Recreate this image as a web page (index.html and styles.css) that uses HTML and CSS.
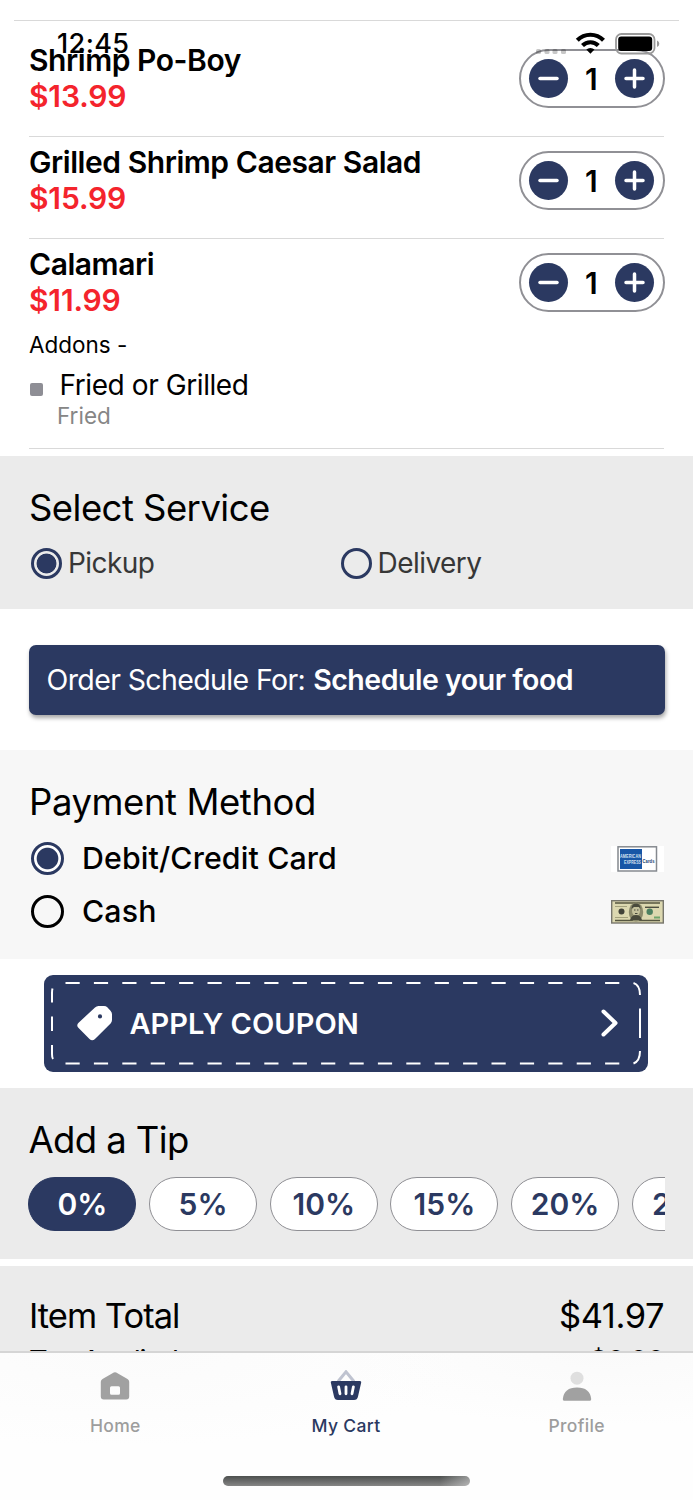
FILE: index.html
```html
<!DOCTYPE html>
<html lang="en">
<head>
<meta charset="utf-8">
<title>My Cart</title>
<link rel="stylesheet" href="styles.css">
</head>
<body>
<div class="status">
  <span class="clock">12:45</span>
  <svg class="status-icons" width="128" height="26" viewBox="0 0 128 26">
    <g fill="#000" fill-opacity=".22"><rect x="4" y="18" width="5" height="5" rx="1.5"/><rect x="12.500" y="18" width="5" height="5" rx="1.500"/><rect x="20.500" y="18" width="5" height="5" rx="1.500"/><rect x="29" y="18" width="5" height="5" rx="1.500"/></g>
    <g fill="none" stroke="#000" stroke-width="4.200"><path d="M45.300 9.200a18.500 18.500 0 0 1 26.200 0"/><path d="M50.500 14.500a11.200 11.200 0 0 1 15.800 0"/></g>
    <path d="M54.300 18.600a6 6 0 0 1 8.200 0l-4.100 4.200z"/>
    <rect x="84" y="3" width="38.500" height="19.500" rx="5.500" fill="none" stroke="#9a9a9a" stroke-width="1.800"/>
    <rect x="86.200" y="5.500" width="34" height="14.500" rx="3"/>
    <path d="M125 9.500q2.300 1 2.300 3.300t-2.300 3.300z" fill="#999"/>
  </svg>
</div>

<main>
  <section class="items">
    <article class="item">
      <div><h2>Shrimp Po-Boy</h2><p class="price">$13.99</p></div>
      <div class="stepper">
        <button aria-label="Decrease"><svg width="39" height="39" viewBox="0 0 39 39"><path d="M11 19.500h17"/></svg></button>
        <span>1</span>
        <button aria-label="Increase"><svg width="39" height="39" viewBox="0 0 39 39"><path d="M11 19.500h17M19.500 11v17"/></svg></button>
      </div>
    </article>
    <article class="item">
      <div><h2>Grilled Shrimp Caesar Salad</h2><p class="price">$15.99</p></div>
      <div class="stepper">
        <button aria-label="Decrease"><svg width="39" height="39" viewBox="0 0 39 39"><path d="M11 19.500h17"/></svg></button>
        <span>1</span>
        <button aria-label="Increase"><svg width="39" height="39" viewBox="0 0 39 39"><path d="M11 19.500h17M19.500 11v17"/></svg></button>
      </div>
    </article>
    <article class="item tall">
      <div>
        <h2>Calamari</h2><p class="price">$11.99</p>
        <p class="addons">Addons -</p>
        <p class="addon"><i></i>Fried or Grilled</p>
        <p class="choice">Fried</p>
      </div>
      <div class="stepper">
        <button aria-label="Decrease"><svg width="39" height="39" viewBox="0 0 39 39"><path d="M11 19.500h17"/></svg></button>
        <span>1</span>
        <button aria-label="Increase"><svg width="39" height="39" viewBox="0 0 39 39"><path d="M11 19.500h17M19.500 11v17"/></svg></button>
      </div>
    </article>
  </section>

  <section class="service">
    <h1>Select Service</h1>
    <div class="options">
      <label><i class="radio on"></i><span>Pickup</span></label>
      <label><i class="radio"></i><span>Delivery</span></label>
    </div>
  </section>

  <section class="schedule">
    <button class="schedule-btn"><span>Order Schedule For:</span><b>Schedule your food</b></button>
  </section>

  <section class="payment">
    <h1>Payment Method</h1>
    <label class="pay"><i class="radio on"></i><span>Debit/Credit Card</span>
      <svg class="card" width="53" height="26" viewBox="0 0 53 26">
        <rect width="53" height="26" fill="#fff"/>
        <rect x="7" y=".800" width="38.500" height="24.200" fill="#fff" stroke="#85898f" stroke-width="1.500"/>
        <path d="M9 3h22v20H9z" fill="#1856a6"/>
        <text x="9" y="12.300" textLength="21" lengthAdjust="spacingAndGlyphs" class="amex">AMERICAN</text>
        <text x="13" y="17.500" textLength="17" lengthAdjust="spacingAndGlyphs" class="amex">EXPRESS</text>
        <text x="31.500" y="17" textLength="12" lengthAdjust="spacingAndGlyphs" class="cards">Cards</text>
      </svg>
    </label>
    <label class="pay"><i class="radio black"></i><span>Cash</span>
      <svg width="53" height="24" viewBox="0 0 53 24">
        <rect x=".700" y=".700" width="51.600" height="22.300" fill="#dcd8b0" stroke="#77766c" stroke-width="1.400"/>
        <path d="M4 3h45M4 20.500h45" stroke="#56563f" stroke-width="1.500"/>
        <path d="M4 6.500h12M4 17.500h13M34 6.500h14" stroke="#a3a17c" stroke-width="1.200"/>
        <circle cx="10.500" cy="11.500" r="3" fill="#414238"/>
        <ellipse cx="25" cy="12" rx="7.200" ry="9.600" fill="#8b8a6b"/>
        <ellipse cx="25" cy="10.500" rx="4" ry="5.700" fill="#c4c19c"/>
        <path d="M20.500 9q0-5.500 4.500-5.500T29.500 9l-1.500-2h-5zM19 20q1.500-5 6-5t6 5z" fill="#494a3c"/>
        <path d="M23 10h1.500m1.500 0h1.500M24 13.500h2.500" stroke="#494a3c"/>
        <circle cx="38.700" cy="11.700" r="3.200" fill="#4c8060"/>
        <path d="M34 7.500h14" stroke="#4d4e43"/><path d="M43 17.500h6" stroke="#6fa56c" stroke-width="2"/>
      </svg>
    </label>
  </section>

  <section class="coupon-wrap">
    <button class="coupon">
      <svg class="stitch" width="604" height="97" viewBox="0 0 604 97">
        <path d="M21.500 8H583M21.500 88.500H583" stroke-dasharray="14.200 14.200"/>
        <path d="M8.500 13.500Q8 15 8 18v9.500M8 41.500V56M8 70v9q0 3.500 1 5M589.500 8q6.500 2 6.500 12M596 33.500V63M596 76q0 10-6.500 12.500"/>
      </svg>
      <svg class="tag" width="35" height="35" viewBox="0 0 35 35"><path fill-rule="evenodd" d="M18 1.500Q19.500 0 21.500 0H27q2 0 3.300 1.300l3.200 3.400Q35 6.200 35 8.200V14q0 2-1.400 3.400L18 33q-2.800 2.500-5.500 0L1.600 22q-2.700-2.600 0-5.300zM23 8.300a2.100 2.100 0 1 0 0 4.200 2.100 2.100 0 0 0 0-4.200z"/></svg>
      <span>APPLY COUPON</span>
      <svg class="chev" width="18" height="28" viewBox="0 0 18 28"><path d="M2.500 2.500l12 11.500-12 11.500"/></svg>
    </button>
  </section>

  <section class="tip">
    <h1>Add a Tip</h1>
    <div class="chips">
      <span class="chip active">0%</span><span class="chip">5%</span><span class="chip">10%</span><span class="chip">15%</span><span class="chip">20%</span><span class="chip">25%</span>
    </div>
  </section>

  <section class="totals">
    <div class="line"><span class="label">Item Total</span><span>$41.97</span></div>
    <div class="line small"><span>Tax Applied</span><span>$0.00</span></div>
  </section>
</main>

<nav class="tabs">
  <a class="tab">
    <svg width="32" height="32" viewBox="0 0 32 32"><path fill="#a1a1a1" fill-rule="evenodd" d="M14.800 2.500q1.200-.700 2.400 0l11.300 6.400q1.700 1 1.700 2.900v14.700q0 3-3 3H4.800q-3 0-3-3V11.800q0-1.900 1.700-2.900zM12.500 16.300q-1.500 0-1.500 1.500v5.400q0 1.500 1.500 1.500h7q1.500 0 1.500-1.500v-5.400q0-1.500-1.500-1.500z"/></svg>
    <span>Home</span>
  </a>
  <a class="tab current">
    <svg width="32" height="32" viewBox="0 0 32 32"><path d="M8 11.500L16 1.800l8 9.700" fill="none" stroke="#bfc3d0" stroke-width="3"/><path d="M2 11h28q1.500 0 1.200 1.500L28 26.500q-.700 3.500-4 3.500H8q-3.300 0-4-3.500L.800 12.500Q.500 11 2 11z" fill="#2b3961"/><path d="M8.600 16.800l1.400 7M16 16.800v7M23.400 16.800l-1.400 7" stroke="#fff" stroke-width="2.800" stroke-linecap="round"/></svg>
    <span>My Cart</span>
  </a>
  <a class="tab">
    <svg width="32" height="32" viewBox="0 0 32 32"><circle cx="16" cy="8.200" r="6.500" fill="#dfdfdf"/><path d="M1.800 29Q3 17.500 16 17.500T30.200 29q.100 1.800-1.200 1.800H3Q1.700 30.800 1.800 29z" fill="#a1a1a1"/></svg>
    <span>Profile</span>
  </a>
  <div class="home-indicator"></div>
</nav>
</body>
</html>
```
FILE: styles.css
```css
* { box-sizing: border-box; }
body { margin: 0; width: 693px; height: 1500px; overflow: hidden; position: relative; background: #fff; color: #000; font-family: Inter, "Liberation Sans", sans-serif; }
h1, h2, p { margin: 0; font-weight: 400; }
button { border: 0; padding: 0; margin: 0; font: inherit; color: inherit; letter-spacing: inherit; background: none; }
svg { display: block; flex: none; }

.status { position: absolute; z-index: 2; left: 57px; top: 31px; width: 603px; height: 26px; display: flex; justify-content: space-between; align-items: center; }
.clock { font-size: 27px; line-height: 28px; font-weight: 550; letter-spacing: .400px; }

.items { height: 456px; margin: 0 14px; padding: 35px 15px 0; background: linear-gradient(#d9d9d9, #d9d9d9) 0 20px / 100% 1px no-repeat; }
.item { display: flex; justify-content: space-between; height: 102px; padding-top: 7px; border-bottom: 1px solid #d9d9d9; }
.item.tall { height: 210px; }
.item h2 { font-size: 30px; line-height: 36px; font-weight: 600; letter-spacing: -.450px; }
.price { font-size: 30px; line-height: 36px; font-weight: 600; color: #f4242c; letter-spacing: -.150px; }
.addons { font-size: 22.500px; line-height: 28px; margin-top: 13px; }
.addon { display: flex; align-items: center; font-size: 28px; line-height: 34px; margin-top: 9px; letter-spacing: -.420px; }
.addon i { width: 13px; height: 13px; border-radius: 2px; background: #8e8e95; margin: 9px 16.500px 0 1px; }
.choice { font-size: 22.500px; line-height: 28px; margin-left: 28px; color: #868686; }
.stepper { display: flex; align-items: center; justify-content: space-between; width: 145.500px; height: 59px; margin: 7px -.500px 0 0; padding: 0 9px 0 8px; border: 2px solid #909095; border-radius: 30px; font-size: 30px; font-weight: 600; }
.stepper button { width: 39px; height: 39px; border-radius: 50%; background: #2b3961; }
.stepper path { stroke: #fff; stroke-width: 3.500; stroke-linecap: round; }

h1 { font-size: 36.500px; line-height: 44px; letter-spacing: -.550px; }
.service { height: 153px; background: #ebebeb; padding: 30px 29px 0; }
.options { display: grid; grid-template-columns: 309.500px 1fr; margin-top: 16px; }
.options label { display: flex; align-items: center; gap: 6px; padding-left: 2px; font-size: 28px; line-height: 34px; letter-spacing: -.550px; color: #373737; }
.radio { flex: none; width: 31px; height: 31px; border: 3px solid #2b3961; border-radius: 50%; }
.radio.on { background: radial-gradient(circle, #2b3961 9.500px, transparent 10.300px); }
.radio.black { border-color: #000; }

.schedule { height: 141px; padding: 35.500px 28.500px; }
.schedule-btn { display: flex; align-items: center; gap: 8px; width: 636px; height: 70px; padding: 0 0 1px 18px; border-radius: 7px; background: #2b3961; color: #fff; font-size: 28.500px; letter-spacing: -.620px; box-shadow: 1px 3px 4px rgba(0,0,0,.35); white-space: nowrap; }
.schedule-btn b { font-weight: 600; letter-spacing: -.480px; }

.payment { height: 209px; background: #f7f7f7; padding: 30px 29px 0; }
.pay { display: flex; align-items: center; height: 53px; font-size: 30.300px; font-weight: 500; letter-spacing: .130px; }
.payment h1 { margin-bottom: 8px; letter-spacing: -.420px; }
.pay .radio { width: 33px; height: 33px; margin: 0 18px 0 2px; }
.pay .radio.on { background: radial-gradient(circle, #2b3961 10.300px, #fff 11.300px); }
.pay span { margin-top: -1px; }
.pay svg { margin-left: auto; }
.amex { font: 700 5px "Liberation Sans", sans-serif; fill: #d5e2f0; }
.cards { font: 700 5.500px "Liberation Sans", sans-serif; fill: #163b6c; }

.coupon-wrap { height: 129px; padding: 16px 44.400px; }
.coupon { position: relative; display: flex; align-items: center; width: 604px; height: 96.500px; padding: 0 29.500px 0 32.500px; border-radius: 9px; background: #2b3961; color: #fff; font-size: 29px; font-weight: 560; letter-spacing: .050px; }
.stitch { position: absolute; left: 0; top: 0; fill: none; stroke: #fff; stroke-width: 2; }
.tag { fill: #fff; margin-right: 17.500px; }
.chev { margin-left: auto; fill: none; stroke: #fff; stroke-width: 4; stroke-linecap: round; stroke-linejoin: round; }

.tip { height: 171px; background: #ebebeb; padding: 30px 28.400px 0; }
.tip h1 { letter-spacing: -.600px; }
.chips { display: flex; gap: 12.700px; margin-top: 15px; overflow: hidden; }
.chip { flex: none; width: 108px; height: 54px; display: flex; align-items: center; justify-content: center; border: 1.500px solid #8f8f94; border-radius: 27px; background: #fff; color: #2b3961; font-size: 30px; font-weight: 600; }
.chip.active { background: #2b3961; border-color: #2b3961; color: #fff; }

.totals { margin-top: 7px; height: 234px; background: #ebebeb; padding: 28px 29px 0; }
.line { display: flex; justify-content: space-between; font-size: 34.500px; line-height: 44px; letter-spacing: -.450px; }
.line .label { letter-spacing: -.980px; }
.line.small { font-size: 29px; line-height: 36px; margin-top: 5px; letter-spacing: -1.100px; }

.tabs { position: absolute; z-index: 3; left: 0; bottom: 0; width: 693px; height: 149px; border-top: 2px solid #d5d5d5; background: radial-gradient(ellipse at 17% 0, #fbfbfb, transparent 45%), radial-gradient(ellipse at 88% 0, #fafafa, transparent 35%), #fefefe; display: grid; grid-template-columns: repeat(3, 230.700px); }
.tab { display: flex; flex-direction: column; align-items: center; padding-top: 17px; gap: 11px; font-size: 17.500px; line-height: 26px; font-weight: 500; letter-spacing: .350px; color: #9d9d9d; }
.current { color: #2b3961; }
.home-indicator { position: absolute; left: 223px; top: 123px; width: 247px; height: 10px; border-radius: 5px; background: linear-gradient(90deg, transparent 88%, rgba(255,255,255,.4)), linear-gradient(#4d504f, #858585); }
```
